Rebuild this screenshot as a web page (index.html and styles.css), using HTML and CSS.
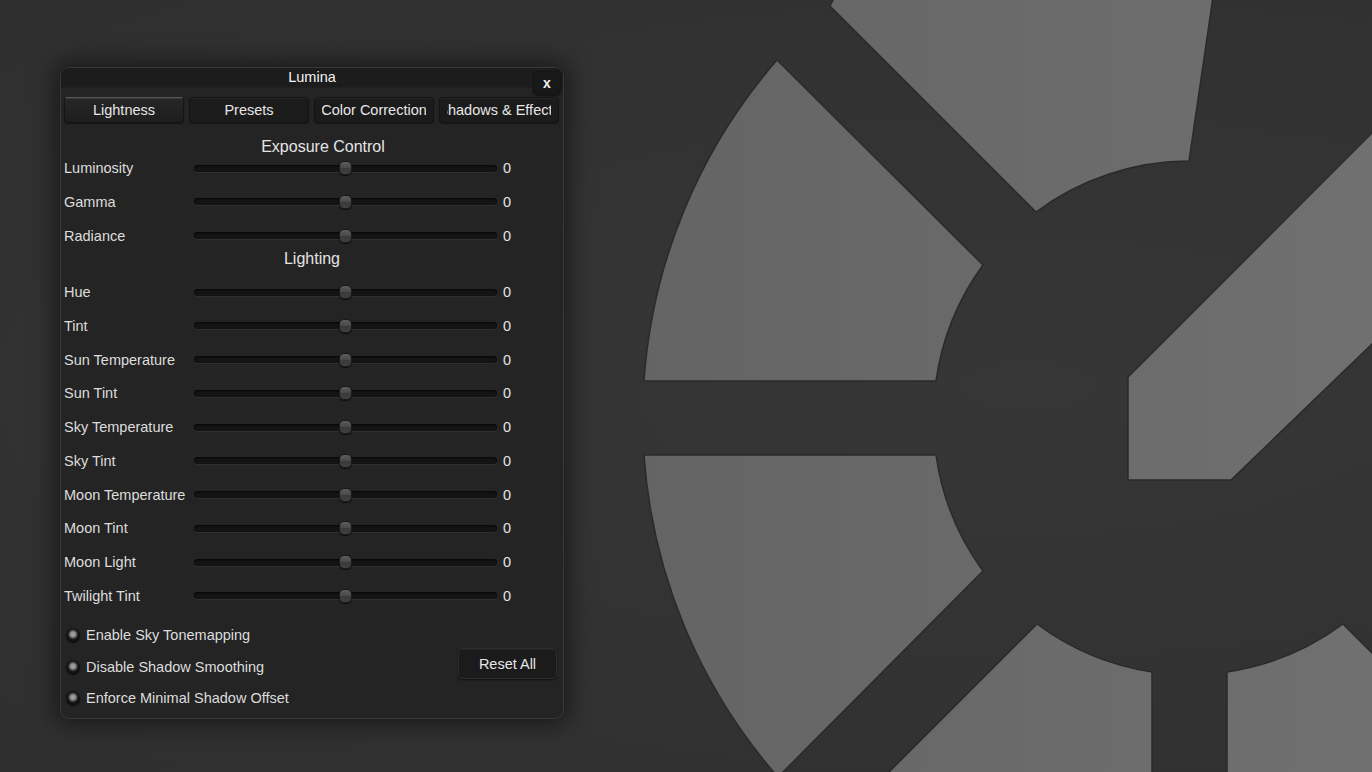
FILE: index.html
```html
<!DOCTYPE html>
<html lang="en">
<head>
<meta charset="utf-8">
<title>Lumina</title>
<link rel="stylesheet" href="styles.css">
</head>
<body>
<div class="stage">
  <svg class="backdrop" width="1372" height="772" viewBox="0 0 1372 772" aria-hidden="true">
    <defs>
      <linearGradient id="seg" x1="640" y1="0" x2="1372" y2="0" gradientUnits="userSpaceOnUse">
        <stop offset="0" stop-color="#646464"/>
        <stop offset="1" stop-color="#707070"/>
      </linearGradient>
    </defs>
    <g class="logo" fill="url(#seg)" stroke="#2a2a2a" stroke-width="1.5" stroke-linejoin="round">
      <path d="M644,381 A547,547 0 0 1 777,60 L983,265 A257,257 0 0 0 936,381 Z"/>
      <path d="M936,455 A257,257 0 0 0 983,571 L778,777 A547,547 0 0 1 644,455 Z"/>
      <path d="M830,6 L1036,212 A257,257 0 0 1 1189,161 L1214,-10 L838,-10 Z"/>
      <path d="M1128,377 L1400,105 L1400,317 L1231,480 L1128,480 Z"/>
      <path d="M1037,624 A257,257 0 0 0 1152,672 L1152,790 L871,790 Z"/>
      <path d="M1227,672 A257,257 0 0 0 1343,624 L1400,681 L1400,790 L1227,790 Z"/>
    </g>
  </svg>

  <div class="panel">
    <div class="titlebar">Lumina<button class="close">x</button></div>

    <div class="tabs">
      <div class="tab active"><span class="tab-clip"><span>Lightness</span></span></div>
      <div class="tab"><span class="tab-clip"><span>Presets</span></span></div>
      <div class="tab"><span class="tab-clip"><span>Color Correction</span></span></div>
      <div class="tab"><span class="tab-clip"><span>Shadows &amp; Effects</span></span></div>
    </div>

    <div class="section-title exposure">Exposure Control</div>
    <div class="rows">
      <div class="row"><span class="label">Luminosity</span><div class="slider"><span class="knob"></span></div><span class="value">0</span></div>
      <div class="row"><span class="label">Gamma</span><div class="slider"><span class="knob"></span></div><span class="value">0</span></div>
      <div class="row"><span class="label">Radiance</span><div class="slider"><span class="knob"></span></div><span class="value">0</span></div>
    </div>

    <div class="section-title lighting">Lighting</div>
    <div class="rows lighting-rows">
      <div class="row"><span class="label">Hue</span><div class="slider"><span class="knob"></span></div><span class="value">0</span></div>
      <div class="row"><span class="label">Tint</span><div class="slider"><span class="knob"></span></div><span class="value">0</span></div>
      <div class="row"><span class="label">Sun Temperature</span><div class="slider"><span class="knob"></span></div><span class="value">0</span></div>
      <div class="row"><span class="label">Sun Tint</span><div class="slider"><span class="knob"></span></div><span class="value">0</span></div>
      <div class="row"><span class="label">Sky Temperature</span><div class="slider"><span class="knob"></span></div><span class="value">0</span></div>
      <div class="row"><span class="label">Sky Tint</span><div class="slider"><span class="knob"></span></div><span class="value">0</span></div>
      <div class="row"><span class="label">Moon Temperature</span><div class="slider"><span class="knob"></span></div><span class="value">0</span></div>
      <div class="row"><span class="label">Moon Tint</span><div class="slider"><span class="knob"></span></div><span class="value">0</span></div>
      <div class="row"><span class="label">Moon Light</span><div class="slider"><span class="knob"></span></div><span class="value">0</span></div>
      <div class="row"><span class="label">Twilight Tint</span><div class="slider"><span class="knob"></span></div><span class="value">0</span></div>
    </div>

    <div class="footer">
      <div class="checks">
        <label class="check"><span class="dot"></span>Enable Sky Tonemapping</label>
        <label class="check"><span class="dot"></span>Disable Shadow Smoothing</label>
        <label class="check"><span class="dot"></span>Enforce Minimal Shadow Offset</label>
      </div>
      <button class="reset">Reset All</button>
    </div>
  </div>
</div>
</body>
</html>
```

FILE: styles.css
```css
html, body {
  margin: 0;
  padding: 0;
  width: 1372px;
  height: 772px;
  overflow: hidden;
  background: #333333;
  font-family: "Liberation Sans", Arial, sans-serif;
  font-size: 14.5px;
  color: #dddddd;
}

.stage {
  position: relative;
  width: 1372px;
  height: 772px;
  background: radial-gradient(ellipse at 75% 50%, #363636 0%, #323232 60%, #2f2f2f 100%);
}

.backdrop {
  position: absolute;
  left: 0;
  top: 0;
}

.panel {
  position: relative;
  box-sizing: border-box;
  width: 504px;
  height: 652px;
  margin: 0;
  top: 67px;
  left: 60px;
  border: 1px solid #383838;
  border-radius: 9px;
  background: #242424;
  box-shadow: 0 0 22px 6px rgba(0, 0, 0, 0.45);
  display: flex;
  flex-direction: column;
}

.titlebar {
  position: relative;
  height: 19px;
  line-height: 19px;
  text-align: center;
  background: #1c1c1c;
  border-radius: 8px 8px 0 0;
  border-bottom: 1px solid #202020;
  color: #f2f2f2;
  font-size: 14.5px;
}

.close {
  position: absolute;
  top: 3px;
  right: 2px;
  width: 28px;
  height: 24px;
  padding: 0;
  border: 1px solid #151515;
  border-radius: 5px;
  background: #181818;
  color: #f2f2f2;
  font-family: "Liberation Sans", Arial, sans-serif;
  font-size: 14px;
  font-weight: bold;
  line-height: 20px;
  box-shadow: 0 1px 2px rgba(0, 0, 0, 0.5);
}

.tabs {
  display: flex;
  gap: 5px;
  margin-top: 9px;
  padding-left: 3px;
  height: 26px;
}

.tab {
  box-sizing: border-box;
  width: 120px;
  height: 26px;
  padding: 0 7px;
  border: 1px solid #141414;
  border-radius: 4px;
  background: #1b1b1b;
  box-shadow: inset 0 1px 0 #262626, 0 1px 1px rgba(0, 0, 0, 0.4);
  color: #e6e6e6;
  display: flex;
}

.tab.active {
  background: linear-gradient(#262626, #1e1e1e);
  border-top-color: #555555;
  box-shadow: inset 0 1px 0 #3a3a3a, 0 1px 1px rgba(0, 0, 0, 0.4);
}

.tab-clip {
  flex: 1;
  overflow: hidden;
  display: flex;
  justify-content: center;
  align-items: center;
  white-space: nowrap;
}

.tab-clip span {
  flex: none;
}

.section-title {
  height: 16px;
  line-height: 16px;
  text-align: center;
  font-size: 16px;
  color: #e4e4e4;
}

.section-title.exposure {
  margin-top: 16px;
  padding-left: 22px;
}

.section-title.lighting {
  margin-top: 3.5px;
}

.rows {
  display: flex;
  flex-direction: column;
  gap: 9.75px;
  margin-top: 1px;
}

.rows.lighting-rows {
  margin-top: 13px;
}

.row {
  display: flex;
  align-items: center;
  height: 24px;
  padding-left: 3px;
}

.label {
  width: 130px;
  flex: none;
  white-space: nowrap;
}

.slider {
  position: relative;
  box-sizing: border-box;
  width: 303px;
  height: 7px;
  border-radius: 4px;
  background: #141414;
  box-shadow: inset 0 1px 2px rgba(0, 0, 0, 0.8), 0 1px 0 #2f2f2f;
}

.knob {
  position: absolute;
  left: 50%;
  top: 50%;
  box-sizing: border-box;
  width: 13px;
  height: 14px;
  margin: -7px 0 0 -6.5px;
  border-radius: 5px;
  border: 1px solid #1a1a1a;
  background: linear-gradient(#5c5c5c 0%, #4a4a4a 45%, #3a3a3a 55%, #404040 100%);
  box-shadow: 0 1px 1px rgba(0, 0, 0, 0.6);
}

.value {
  margin-left: 6px;
  color: #e4e4e4;
}

.footer {
  display: flex;
  justify-content: space-between;
  margin-top: 15.25px;
}

.checks {
  display: flex;
  flex-direction: column;
  gap: 7.5px;
  padding-left: 5px;
}

.check {
  display: flex;
  align-items: center;
  gap: 6px;
  height: 24px;
  white-space: nowrap;
}

.dot {
  box-sizing: border-box;
  width: 14px;
  height: 14px;
  border-radius: 50%;
  background: radial-gradient(circle at 50% 45%, #a8a8a8 0, #8e8e8e 2.5px, #444444 4px, #121212 5.5px, #101010 7px);
  box-shadow: 0 1px 1px rgba(0, 0, 0, 0.8);
}

.reset {
  align-self: flex-start;
  margin-top: 25px;
  margin-right: 6px;
  width: 99px;
  height: 31px;
  padding: 0;
  border: 1px solid #2c2c2c;
  border-radius: 4px;
  background: #1b1b1b;
  box-shadow: inset 0 1px 0 #252525, 0 1px 2px rgba(0, 0, 0, 0.5);
  color: #e6e6e6;
  font-family: "Liberation Sans", Arial, sans-serif;
  font-size: 14.5px;
}
```
